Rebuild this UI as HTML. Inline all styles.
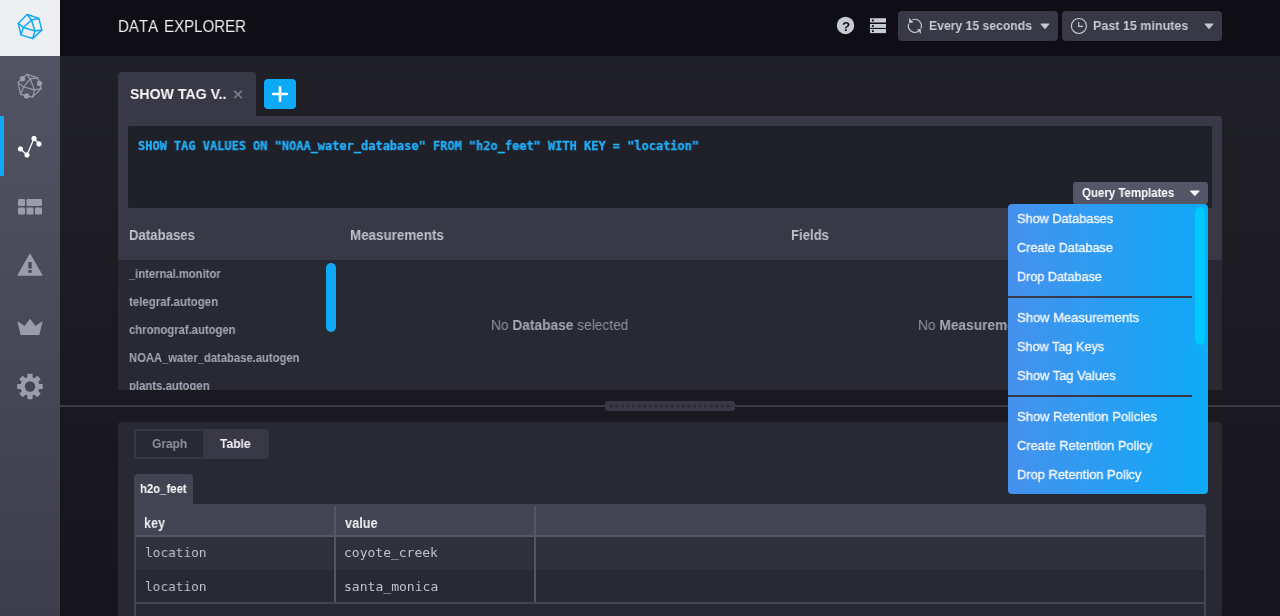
<!DOCTYPE html>
<html lang="en">
<head>
<meta charset="utf-8">
<title>Data Explorer</title>
<style>
*{box-sizing:border-box;margin:0;padding:0}
html,body{width:1280px;height:616px;overflow:hidden;background:#0f0e15}
body{position:relative;font-family:"Liberation Sans",sans-serif;color:#bec2cc;-webkit-font-smoothing:antialiased}
.abs{position:absolute}
.t{position:absolute;white-space:nowrap;line-height:1;transform-origin:0 50%;will-change:transform}
#nodb b,#nomeas b{color:#a4a8b6}
#query{-webkit-text-stroke:0.3px #22b0fb}
#title{word-spacing:2px;font-kerning:none}
.di{-webkit-text-stroke:0.35px #f4f8fd}
.b{font-weight:bold}
.mono{font-family:"DejaVu Sans Mono","Liberation Mono",monospace}

/* page */
#page{left:60px;top:56px;width:1220px;height:560px;background:linear-gradient(to bottom,#202028 0,#16151b 100%)}
#header{left:60px;top:0;width:1220px;height:56px;background:#0f0e15}

/* sidebar */
#sidebar{left:0;top:0;width:60px;height:616px;background:linear-gradient(to bottom,#545667 0,#3d3d4b 100%)}
#logo{left:0;top:0;width:60px;height:56px;background:#eeeff2}
#activebar{left:0;top:116px;width:4px;height:60px;background:#0eaaf8}

/* header buttons */
.hbtn{height:30px;top:11px;background:#383846;border-radius:4px}

/* query maker */
#tab{left:118px;top:72px;width:138px;height:44px;background:#383846;border-radius:4px 4px 0 0}
#addbtn{left:264px;top:79px;width:32px;height:30px;background:#0eaaf8;border-radius:4px}
#qm{left:118px;top:116px;width:1104px;height:144px;background:#383846;border-radius:0 3px 0 0}
#qtext{left:128px;top:126px;width:1084px;height:82px;background:#202028;border-radius:2px}
#qtbtn{left:1073px;top:182px;width:135px;height:22px;background:#545667;border-radius:3px}
#list{left:118px;top:260px;width:1104px;height:130px;background:#292933;overflow:hidden}
.li{font-size:12px;font-weight:bold;color:#a4a8b6;left:11px}
.sb{border-radius:5px}

/* resizer */
#rline{left:60px;top:405px;width:1220px;height:2px;background:#383846}
#rhandle{left:605px;top:401px;width:130px;height:10px;background:#383846;border-radius:3px}

/* bottom */
#bottom{left:118px;top:422px;width:1104px;height:200px;background:#292933;border-radius:4px 4px 0 0}
#toggle{left:134px;top:429px;width:135px;height:30px;background:#383846;border-radius:4px}
#tg-graph{left:136px;top:431px;width:67px;height:26px;background:#292933;border-radius:3px 0 0 3px}
#ttab{left:134px;top:474px;width:59px;height:30px;background:#434453;border-radius:4px 4px 0 0}
#tbl{left:134px;top:504px;width:1072px;height:120px;border:2px solid #434453;border-top:0;border-radius:0 4px 0 0}
#thead{left:134px;top:504px;width:1072px;height:31px;background:#434453;border-radius:0 4px 0 0}
.hl{background:#545667}

/* dropdown */
#dd{left:1008px;top:204px;width:200px;height:290px;border-radius:4px;background:linear-gradient(to right,#4591ed 0,#0eaaf8 100%);overflow:hidden}
.di{font-size:13px;color:#eef4fb;left:9px}
.dv{left:0;width:184px;height:2px;background:#383846}
</style>
</head>
<body>

<div id="header" class="abs"></div>
<div id="page" class="abs"></div>

<!-- SIDEBAR -->
<div id="sidebar" class="abs"></div>
<div id="logo" class="abs"></div>
<div id="activebar" class="abs"></div>
<svg class="abs" style="left:0;top:0" width="60" height="616" viewBox="0 0 60 616">
  <!-- logo -->
  <g fill="none" stroke="#0eaaf8" stroke-width="1.5" stroke-linejoin="round" stroke-linecap="round">
    <path d="M27.2 14.5 L38.9 18.4 L41.8 30.1 L32.7 38.5 L21 34.9 L18.3 23.3 Z"/>
    <path d="M31.4 20 L23.3 27.5 L35 31 Z"/>
    <path d="M27.2 14.5 L31.4 20 L38.9 18.4 M18.3 23.3 L23.3 27.5 L21 34.9 M41.8 30.1 L35 31 L32.7 38.5"/>
  </g>
  <!-- hosts icon -->
  <g fill="none" stroke="#999dab" stroke-width="1.2" stroke-linejoin="round" stroke-linecap="round">
    <path d="M26.9 74.3 L37.7 77.9 L41.2 88.5 L32.5 97.2 L20.5 94.3 L18.1 82.6 Z"/>
    <path d="M30.1 78.8 L23.7 87 L34.5 89.9 Z"/>
    <path d="M26.9 74.3 L30.1 78.8 L37.7 77.9 M18.1 82.6 L23.7 87 L20.5 94.3 M41.2 88.5 L34.5 89.9 L32.5 97.2"/>
  </g>
  <g fill="#999dab">
    <circle cx="22.5" cy="78.8" r="2.7"/><circle cx="39.5" cy="83.5" r="2.7"/><circle cx="26.6" cy="96" r="2.7"/>
  </g>
  <!-- data explorer (active) -->
  <g fill="#fff" stroke="#fff">
    <path d="M20.5 149 L27 155 L34 138.5 L39 144" fill="none" stroke-width="1.3"/>
    <circle cx="20.5" cy="149" r="2.2"/><circle cx="27" cy="155" r="2.2"/><circle cx="34" cy="138.5" r="2.2"/><circle cx="39" cy="144" r="2.2"/>
  </g>
  <!-- dashboards -->
  <g fill="#999dab">
    <rect x="18" y="199" width="7" height="7" rx="1.2"/><rect x="26.5" y="199" width="15.5" height="7" rx="1.2"/>
    <rect x="18" y="207.5" width="7" height="7" rx="1.2"/><rect x="26.5" y="207.5" width="7" height="7" rx="1.2"/><rect x="35" y="207.5" width="7" height="7" rx="1.2"/>
  </g>
  <!-- alert -->
  <path d="M30 254.5 L41.7 275 L18.3 275 Z" fill="#999dab" stroke="#999dab" stroke-width="1.5" stroke-linejoin="round"/>
  <rect x="28.3" y="262" width="3.4" height="6.5" fill="#494a5a"/><rect x="28.3" y="270" width="3.4" height="2.8" fill="#494a5a"/>
  <!-- crown -->
  <path d="M17.3 321 L24.5 326 L30 318.8 L35.5 326 L42.7 321 L39.3 335 L20.7 335 Z" fill="#999dab"/>
  <!-- gear -->
  <g transform="translate(30 386.5)" fill="#999dab">
    <rect x="-2.6" y="-12.8" width="5.2" height="25.6" rx="0.8"/>
    <rect x="-2.6" y="-12.8" width="5.2" height="25.6" rx="0.8" transform="rotate(45)"/>
    <rect x="-2.6" y="-12.8" width="5.2" height="25.6" rx="0.8" transform="rotate(90)"/>
    <rect x="-2.6" y="-12.8" width="5.2" height="25.6" rx="0.8" transform="rotate(135)"/>
    <circle r="9.6"/>
  </g>
  <circle cx="30" cy="386.5" r="5.2" fill="#444553"/>
</svg>

<!-- HEADER -->
<div class="t" id="title" style="left:118.00px;top:18.00px;font-size:17px;color:#eeeff2;transform:scaleX(0.8851)">DATA EXPLORER</div>

<svg class="abs" style="left:830px;top:8px" width="64" height="36" viewBox="830 8 64 36">
  <circle cx="845.55" cy="25.45" r="8.7" fill="#c6cad3"/>
  <g fill="#c6cad3">
    <rect x="870" y="18.2" width="16" height="4.3"/><rect x="870" y="24" width="16" height="3.9"/><rect x="870" y="29" width="16" height="4.1"/>
  </g>
  <g fill="#0f0e15">
    <rect x="871.9" y="19.5" width="1.9" height="1.8"/><rect x="871.9" y="25.1" width="1.9" height="1.8"/><rect x="871.9" y="30.2" width="1.9" height="1.8"/>
  </g>
</svg>
<div class="t b" style="left:841.6px;top:19.6px;font-size:13.4px;color:#0f0e15">?</div>

<div class="abs hbtn" style="left:898px;width:160px"></div>
<div class="abs hbtn" style="left:1062px;width:160px"></div>
<svg class="abs" style="left:898px;top:11px" width="324" height="30" viewBox="898 11 324 30">
  <!-- refresh -->
  <g fill="none" stroke="#c6cad3" stroke-width="1.15">
    <path d="M912.47 19.82 A6.5 6.5 0 0 1 920.84 28.49"/>
    <path d="M918.53 31.24 A6.5 6.5 0 0 1 908.79 23.63"/>
  </g>
  <path d="M908.9 18 L909.3 23.2 L913.6 22.3 Z" fill="#c6cad3"/>
  <path d="M921 34 L920.7 29 L916.9 29.3 Z" fill="#c6cad3"/>
  <!-- carets -->
  <path d="M1040.8 23.9 L1049.2 23.9 L1045 28.8 Z" fill="#c6cad3" stroke="#c6cad3" stroke-width="0.8" stroke-linejoin="round"/>
  <path d="M1204.8 23.9 L1213.2 23.9 L1209 28.8 Z" fill="#c6cad3" stroke="#c6cad3" stroke-width="0.8" stroke-linejoin="round"/>
  <!-- clock -->
  <circle cx="1078.9" cy="25.95" r="7.5" fill="none" stroke="#c6cad3" stroke-width="1.15"/>
  <path d="M1078.7 22.1 V26.3 H1083" fill="none" stroke="#c6cad3" stroke-width="1.15"/>
</svg>
<div class="t" id="hb1" style="left:929.00px;top:19.00px;font-size:13.4px;color:#c6cad3;transform:scaleX(0.9096);font-weight:bold">Every 15 seconds</div>
<div class="t" id="hb2" style="left:1093.00px;top:19.00px;font-size:13.4px;color:#c6cad3;transform:scaleX(0.9347);font-weight:bold">Past 15 minutes</div>

<!-- QUERY MAKER -->
<div id="tab" class="abs"></div>
<div id="addbtn" class="abs"></div>
<svg class="abs" style="left:264px;top:79px" width="32" height="30" viewBox="0 0 32 30"><path d="M9.2 15 H22.8 M16 8.2 V21.8" stroke="#fff" stroke-width="2.6" stroke-linecap="round"/></svg>
<div id="qm" class="abs"></div>
<div id="qtext" class="abs"></div>
<div class="t" id="tabt" style="left:130.00px;top:86.00px;font-size:15.5px;color:#f6f6f8;transform:scaleX(0.9114);font-weight:bold">SHOW TAG V..</div>
<svg class="abs" style="left:232px;top:88px" width="12" height="12" viewBox="0 0 12 12"><path d="M2.2 2.7 L9.8 10.1 M9.8 2.7 L2.2 10.1" stroke="#757888" stroke-width="1.9"/></svg>
<div class="t" id="query" style="left:138.00px;top:140.00px;font-size:12px;color:#22b0fb;transform:scaleX(0.9956);font-weight:bold;font-family:'DejaVu Sans Mono','Liberation Mono',monospace">SHOW TAG VALUES ON "NOAA_water_database" FROM "h2o_feet" WITH KEY = "location"</div>

<div id="qtbtn" class="abs"></div>
<div class="t" id="qtt" style="left:1082.00px;top:187.70px;font-size:11.9px;color:#ffffff;transform:scaleX(0.9644);font-weight:bold">Query Templates</div>
<svg class="abs" style="left:1186px;top:186px" width="18" height="14" viewBox="1186 186 18 14"><path d="M1190.4 190.9 L1199.2 190.9 L1194.8 195.8 Z" fill="#fff" stroke="#fff" stroke-width="0.8" stroke-linejoin="round"/></svg>

<div class="t" id="h-db" style="left:129.00px;top:228.25px;font-size:14.3px;color:#bec2cc;transform:scaleX(0.9221);font-weight:bold">Databases</div>
<div class="t" id="h-ms" style="left:350.00px;top:228.25px;font-size:14.3px;color:#bec2cc;transform:scaleX(0.9366);font-weight:bold">Measurements</div>
<div class="t" id="h-fl" style="left:791.00px;top:228.25px;font-size:14.3px;color:#bec2cc;transform:scaleX(0.9180);font-weight:bold">Fields</div>

<div id="list" class="abs">
  <div class="t" id="li1" style="left:11.00px;top:8.00px;font-size:12.3px;color:#a4a8b6;transform:scaleX(0.9118);font-weight:bold">_internal.monitor</div>
  <div class="t" id="li2" style="left:11.00px;top:36.00px;font-size:12.3px;color:#a4a8b6;transform:scaleX(0.9314);font-weight:bold">telegraf.autogen</div>
  <div class="t" id="li3" style="left:11.00px;top:64.00px;font-size:12.3px;color:#a4a8b6;transform:scaleX(0.9178);font-weight:bold">chronograf.autogen</div>
  <div class="t" id="li4" style="left:11.00px;top:92.00px;font-size:12.3px;color:#a4a8b6;transform:scaleX(0.9137);font-weight:bold">NOAA_water_database.autogen</div>
  <div class="t" id="li5" style="left:11.00px;top:120.00px;font-size:12.3px;color:#a4a8b6;transform:scaleX(0.9223);font-weight:bold">plants.autogen</div>
  <div class="abs sb" style="left:208px;top:3px;width:10px;height:69px;background:#0eaaf8"></div>
  <div class="t" id="nodb" style="left:373.00px;top:58.00px;font-size:14.3px;color:#8e91a1;transform:scaleX(0.9603)">No <b>Database</b> selected</div>
  <div class="t" id="nomeas" style="left:800.00px;top:58.00px;font-size:14.3px;color:#8e91a1;transform:scaleX(0.9603)">No <b>Measurement</b> selected</div>
</div>

<!-- RESIZER -->
<div id="rline" class="abs"></div>
<div id="rhandle" class="abs"></div>
<svg class="abs" style="left:605px;top:401px" width="130" height="10" viewBox="0 0 130 10">
  <line x1="6.4" y1="5" x2="123" y2="5" stroke="#292933" stroke-width="3" stroke-linecap="round" stroke-dasharray="0 5.54"/>
</svg>

<!-- BOTTOM -->
<div id="bottom" class="abs"></div>
<div id="toggle" class="abs"></div>
<div id="tg-graph" class="abs"></div>
<div class="t" id="tg1" style="left:152.00px;top:437.00px;font-size:13.4px;color:#8e91a1;transform:scaleX(0.8915);font-weight:bold">Graph</div>
<div class="t" id="tg2" style="left:220.00px;top:437.00px;font-size:13.4px;color:#f6f6f8;transform:scaleX(0.8986);font-weight:bold">Table</div>

<div id="ttab" class="abs"></div>
<div class="t" id="ttabt" style="left:140.00px;top:483.00px;font-size:12.3px;color:#ffffff;transform:scaleX(0.9218);font-weight:bold">h2o_feet</div>
<div id="tbl" class="abs"></div>
<div id="thead" class="abs"></div>
<div class="abs" style="left:136px;top:537px;width:1068px;height:33px;background:#31313d"></div>
<div class="abs hl" style="left:136px;top:535px;width:1068px;height:2px"></div>
<div class="abs hl" style="left:136px;top:602px;width:1068px;height:2px;background:#434453"></div>
<div class="abs hl" style="left:334px;top:506px;width:2px;height:96px;background:#545667"></div>
<div class="abs hl" style="left:534px;top:506px;width:2px;height:96px;background:#545667"></div>
<div class="t" id="th1" style="left:144.00px;top:516.00px;font-size:14.3px;color:#eeeff2;transform:scaleX(0.8787);font-weight:bold">key</div>
<div class="t" id="th2" style="left:345.00px;top:516.00px;font-size:14.3px;color:#eeeff2;transform:scaleX(0.8950);font-weight:bold">value</div>
<div class="t" id="c11" style="left:145.00px;top:546.00px;font-size:13px;color:#bec2cc;transform:scaleX(0.9822);font-family:'DejaVu Sans Mono','Liberation Mono',monospace">location</div>
<div class="t" id="c12" style="left:344.00px;top:546.00px;font-size:13px;color:#bec2cc;transform:scaleX(0.9985);font-family:'DejaVu Sans Mono','Liberation Mono',monospace">coyote_creek</div>
<div class="t" id="c21" style="left:145.00px;top:580.00px;font-size:13px;color:#bec2cc;transform:scaleX(0.9822);font-family:'DejaVu Sans Mono','Liberation Mono',monospace">location</div>
<div class="t" id="c22" style="left:344.00px;top:580.00px;font-size:13px;color:#bec2cc;transform:scaleX(1.0037);font-family:'DejaVu Sans Mono','Liberation Mono',monospace">santa_monica</div>

<!-- DROPDOWN -->
<div id="dd" class="abs">
  <div class="t di" id="d1" style="left:9.00px;top:8.25px;font-size:13.4px;color:#f4f8fd;transform:scaleX(0.9493)">Show Databases</div>
  <div class="t di" id="d2" style="left:9.00px;top:37.00px;font-size:13.4px;color:#f4f8fd;transform:scaleX(0.9471)">Create Database</div>
  <div class="t di" id="d3" style="left:9.00px;top:65.75px;font-size:13.4px;color:#f4f8fd;transform:scaleX(0.9419)">Drop Database</div>
  <div class="abs dv" style="top:92px"></div>
  <div class="t di" id="d4" style="left:9.00px;top:107.00px;font-size:13.4px;color:#f4f8fd;transform:scaleX(0.9710)">Show Measurements</div>
  <div class="t di" id="d5" style="left:9.00px;top:135.75px;font-size:13.4px;color:#f4f8fd;transform:scaleX(0.9464)">Show Tag Keys</div>
  <div class="t di" id="d6" style="left:9.00px;top:164.75px;font-size:13.4px;color:#f4f8fd;transform:scaleX(0.9660)">Show Tag Values</div>
  <div class="abs dv" style="top:191px"></div>
  <div class="t di" id="d7" style="left:9.00px;top:206.25px;font-size:13.4px;color:#f4f8fd;transform:scaleX(0.9688)">Show Retention Policies</div>
  <div class="t di" id="d8" style="left:9.00px;top:235.00px;font-size:13.4px;color:#f4f8fd;transform:scaleX(0.9608)">Create Retention Policy</div>
  <div class="t di" id="d9" style="left:9.00px;top:263.75px;font-size:13.4px;color:#f4f8fd;transform:scaleX(0.9601)">Drop Retention Policy</div>
  <div class="abs sb" style="left:187px;top:3px;width:10px;height:138px;background:#00c9ff"></div>
</div>

</body>
</html>
